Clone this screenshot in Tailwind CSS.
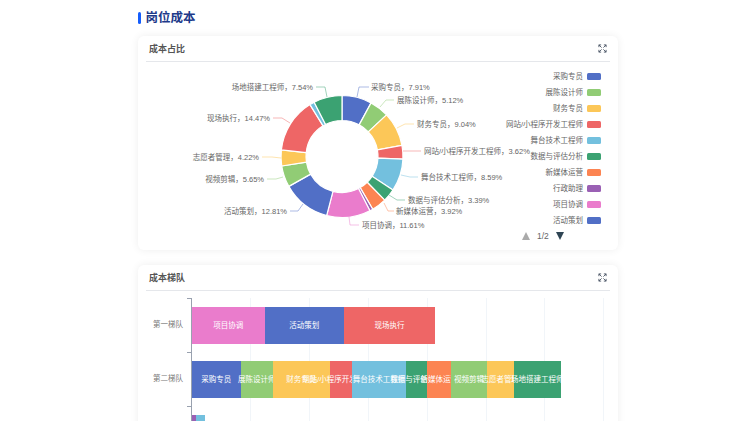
<!DOCTYPE html>
<html lang="en">
<head>
  <meta charset="UTF-8">
  <title>岗位成本</title>
  <script src="https://cdn.jsdelivr.net/npm/@tailwindcss/browser@4"></script>
</head>
<body class="bg-white h-[421px] overflow-hidden font-['Liberation_Sans','Noto_Sans_CJK_SC',sans-serif]">
  <div class="w-[480px] ml-[138px]">

    <!-- Page title -->
    <div class="flex items-center gap-[5px] h-[36px]">
      <span class="w-[3px] h-[12px] -ml-[0.5px] rounded-sm bg-blue-600"></span>
      <h1 class="text-[12.5px] font-bold text-[#1e3a8a]">岗位成本</h1>
    </div>

    <!-- Cost share -->
    <section class="h-[214px] rounded-md bg-white shadow-[0_0_8px_rgba(0,0,0,0.07)] px-2">
      <div class="flex items-center justify-between h-[26px] border-b border-gray-200 px-[3px]">
        <h2 class="text-[9px] font-bold text-[#555] pt-[3px]">成本占比</h2>
        <svg class="w-[9px] h-[9px] text-gray-600" viewBox="0 0 10 10" fill="none" stroke="currentColor" stroke-width="1">
          <path d="M1 3.5V1h2.5M1 1l3 3M9 3.5V1H6.5M9 1L6 4M1 6.5V9h2.5M1 9l3-3M9 6.5V9H6.5M9 9L6 6"/>
        </svg>
      </div>
      <div class="relative h-[188px]">
        <svg id="donut" class="absolute left-0 top-0" width="464" height="188" viewBox="146 62 464 188"></svg>
        <div id="legend" class="absolute right-[9px] top-[9px] flex flex-col items-end gap-[5.05px]"></div>
        <div class="absolute left-[376px] top-[168px] flex items-center gap-[7px] text-[8.5px] text-[#666]">
          <span class="w-0 h-0 border-x-[4.5px] border-x-transparent border-b-[8px] border-b-[#aaa]"></span>
          <span>1/2</span>
          <span class="w-0 h-0 border-x-[4.5px] border-x-transparent border-t-[8px] border-t-[#2f4554]"></span>
        </div>
      </div>
    </section>

    <!-- Cost tiers -->
    <section class="mt-[15px] h-[200px] rounded-md bg-white shadow-[0_0_8px_rgba(0,0,0,0.07)] px-2">
      <div class="flex items-center justify-between h-[26px] border-b border-gray-200 px-[3px]">
        <h2 class="text-[9px] font-bold text-[#555] pt-[3px]">成本梯队</h2>
        <svg class="w-[9px] h-[9px] text-gray-600" viewBox="0 0 10 10" fill="none" stroke="currentColor" stroke-width="1">
          <path d="M1 3.5V1h2.5M1 1l3 3M9 3.5V1H6.5M9 1L6 4M1 6.5V9h2.5M1 9l3-3M9 6.5V9H6.5M9 9L6 6"/>
        </svg>
      </div>
      <div class="relative h-[170px] mt-[7px] ml-[45px]">
        <!-- grid lines -->
        <div class="absolute inset-0 flex pl-[1px]">
          <div class="w-[59px] shrink-0 border-r border-slate-100"></div>
          <div class="w-[59px] shrink-0 border-r border-slate-100"></div>
          <div class="w-[59px] shrink-0 border-r border-slate-100"></div>
          <div class="w-[59px] shrink-0 border-r border-slate-100"></div>
          <div class="w-[59px] shrink-0 border-r border-slate-100"></div>
          <div class="w-[58px] shrink-0 border-r border-slate-100"></div>
          <div class="w-[59px] shrink-0 border-r border-slate-100"></div>
        </div>
        <div id="bars" class="relative border-l border-gray-400"></div>
      </div>
    </section>
  </div>

  <script>
    const colors = {
      blue: "#516fc6", green: "#91cc75", yellow: "#fcc758", red: "#ee6666",
      sky: "#73c0de", teal: "#3ba272", orange: "#fc8452", purple: "#9a60b4", pink: "#ea7ccc"
    };

    // label anchor: [line start x,y, bend x,y, end x,y, text x,y, text-anchor]
    const slices = [
      { name: "采购专员", pct: 7.91, color: colors.blue, line: [357,97,359,87,369,87], text: [371,87,"start"] },
      { name: "展陈设计师", pct: 5.12, color: colors.green, line: [380,107,386,100,394,100], text: [397,100,"start"] },
      { name: "财务专员", pct: 9.04, color: colors.yellow, line: [397,128,405,124,414,124], text: [417,124,"start"] },
      { name: "网站/小程序开发工程师", pct: 3.62, color: colors.red, line: [403,151,412,151,421,151], text: [424,151,"start"] },
      { name: "舞台技术工程师", pct: 8.59, color: colors.sky, line: [401,175,410,177,418,177], text: [421,177,"start"] },
      { name: "数据与评估分析", pct: 3.39, color: colors.teal, line: [389,195,397,200,405,200], text: [408,200,"start"] },
      { name: "新媒体运营", pct: 3.92, color: colors.orange, line: [384,203,388,211,394,211], text: [396,211,"start"] },
      { name: "行政助理", pct: 0.85, color: colors.purple },
      { name: "项目协调", pct: 11.61, color: colors.pink, line: [349,217,350,225,359,225], text: [362,225,"start"] },
      { name: "活动策划", pct: 12.81, color: colors.blue, line: [303,204,298,211,290,211], text: [287,211,"end"] },
      { name: "视频剪辑", pct: 5.65, color: colors.green, line: [283,177,276,179,267,179], text: [264,179,"end"] },
      { name: "志愿者管理", pct: 4.22, color: colors.yellow, line: [281,158,272,157,262,157], text: [259,157,"end"] },
      { name: "现场执行", pct: 14.47, color: colors.red, line: [290,123,282,118,273,118], text: [270,118,"end"] },
      { name: "其他", pct: 1.26, color: colors.sky },
      { name: "场地搭建工程师", pct: 7.54, color: colors.teal, line: [327,97,325,87,316,87], text: [313,87,"end"] }
    ];

    const cx = 342, cy = 156.5, outer = 61, inner = 36;
    const svgNS = "http://www.w3.org/2000/svg";
    const donut = document.getElementById("donut");

    function polar(r, a) {
      return [cx + r * Math.sin(a), cy - r * Math.cos(a)];
    }

    // Donut slices, white stroke gives the gaps
    let start = 0;
    slices.forEach(s => {
      const end = start + s.pct / 100 * Math.PI * 2;
      const large = end - start > Math.PI ? 1 : 0;
      const [x1, y1] = polar(outer, start), [x2, y2] = polar(outer, end);
      const [x3, y3] = polar(inner, end), [x4, y4] = polar(inner, start);
      const path = document.createElementNS(svgNS, "path");
      path.setAttribute("d", `M${x1} ${y1}A${outer} ${outer} 0 ${large} 1 ${x2} ${y2}L${x3} ${y3}A${inner} ${inner} 0 ${large} 0 ${x4} ${y4}Z`);
      path.setAttribute("fill", s.color);
      path.setAttribute("stroke", "#fff");
      path.setAttribute("stroke-width", "1.2");
      path.setAttribute("stroke-linejoin", "round");
      donut.appendChild(path);
      start = end;

      if (!s.line) return;
      const l = s.line;
      const line = document.createElementNS(svgNS, "polyline");
      line.setAttribute("points", `${l[0]},${l[1]} ${l[2]},${l[3]} ${l[4]},${l[5]}`);
      line.setAttribute("fill", "none");
      line.setAttribute("stroke", s.color);
      line.setAttribute("stroke-opacity", "0.6");
      line.setAttribute("stroke-width", "0.8");
      donut.appendChild(line);

      const label = document.createElementNS(svgNS, "text");
      label.setAttribute("x", s.text[0]);
      label.setAttribute("y", s.text[1]);
      label.setAttribute("text-anchor", s.text[2]);
      label.setAttribute("dominant-baseline", "central");
      label.setAttribute("class", "text-[7.5px] fill-[#666]");
      label.textContent = `${s.name}，${s.pct.toFixed(2)}%`;
      donut.appendChild(label);
    });

    // Legend
    const legendItems = [
      ["采购专员", colors.blue], ["展陈设计师", colors.green], ["财务专员", colors.yellow],
      ["网站/小程序开发工程师", colors.red], ["舞台技术工程师", colors.sky], ["数据与评估分析", colors.teal],
      ["新媒体运营", colors.orange], ["行政助理", colors.purple], ["项目协调", colors.pink], ["活动策划", colors.blue]
    ];
    const legend = document.getElementById("legend");
    legendItems.forEach(([name, color]) => {
      const row = document.createElement("div");
      row.className = "flex items-center gap-[4px] h-[11px] text-[7.5px] text-[#666] whitespace-nowrap";
      row.innerHTML = `<span>${name}</span><span class="w-[14px] h-[7px] rounded-[1.5px]" style="background:${color}"></span>`;
      legend.appendChild(row);
    });

    // Stacked bars
    const tiers = [
      { name: "第一梯队", items: [["项目协调", 72.5, colors.pink], ["活动策划", 79.5, colors.blue], ["现场执行", 91, colors.red]] },
      { name: "第二梯队", items: [
        ["采购专员", 48.6, colors.blue], ["展陈设计师", 32.4, colors.green], ["财务专员", 56.6, colors.yellow],
        ["网站/小程序开发工程师", 22.4, colors.red], ["舞台技术工程师", 54, colors.sky], ["数据与评估分析", 21.3, colors.teal],
        ["新媒体运营", 24, colors.orange], ["视频剪辑", 35.7, colors.green], ["志愿者管理", 26.6, colors.yellow],
        ["场地搭建工程师", 47.4, colors.teal]
      ] },
      { name: "第三梯队", items: [["", 4.3, colors.purple], ["", 9, colors.sky]] }
    ];
    const bars = document.getElementById("bars");
    tiers.forEach(tier => {
      const row = document.createElement("div");
      row.className = "relative flex items-center h-[54px]";
      row.innerHTML = `
        <span class="absolute left-[-5px] top-0 w-[4px] border-t border-gray-400"></span>
        <span class="absolute right-full mr-[9px] text-[7.5px] text-[#777] whitespace-nowrap">${tier.name}</span>
        <div class="flex h-[37px]">
          ${tier.items.map(([name, w, color]) => `
            <div class="relative flex items-center justify-center shrink-0" style="width:${w}px;background:${color}">
              <span class="text-[7.5px] text-white whitespace-nowrap pt-[1px]">${name}</span>
            </div>`).join("")}
        </div>`;
      bars.appendChild(row);
    });
  </script>
</body>
</html>
